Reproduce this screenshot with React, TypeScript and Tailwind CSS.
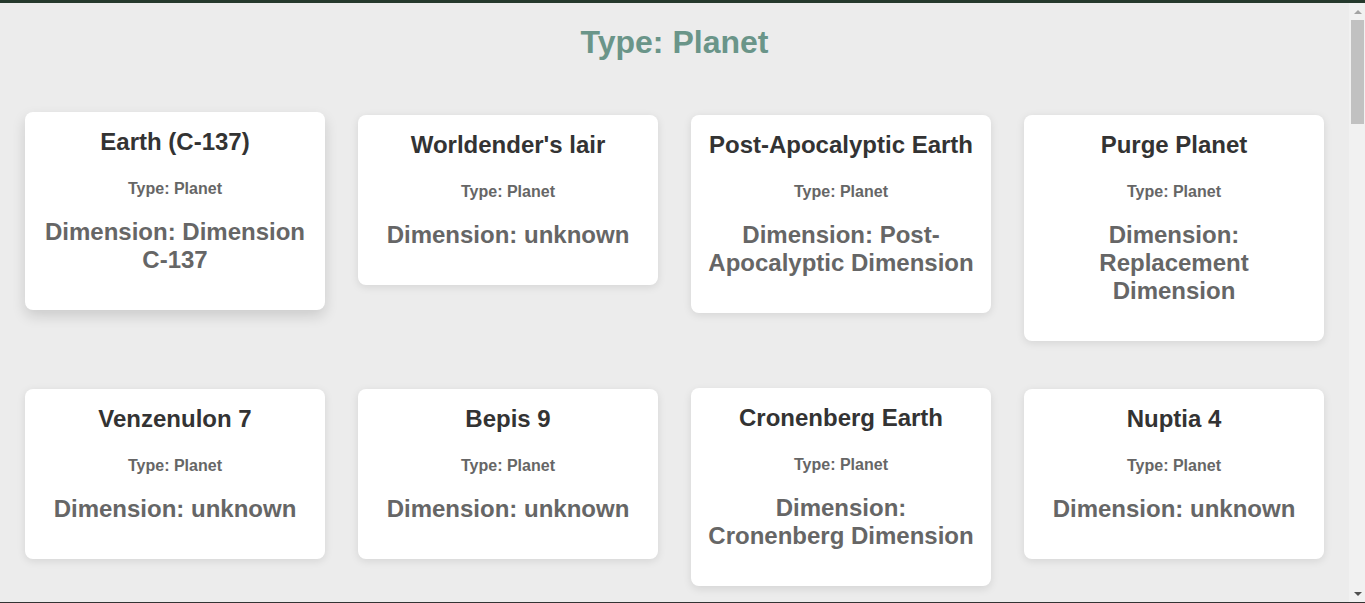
import React from "react";

type Planet = {
  name: string;
  dimension: string;
  lift?: string;
};

const planets: Planet[] = [
  { name: "Earth (C-137)", dimension: "Dimension C-137", lift: "hover" },
  { name: "Worldender's lair", dimension: "unknown" },
  { name: "Post-Apocalyptic Earth", dimension: "Post-Apocalyptic Dimension" },
  { name: "Purge Planet", dimension: "Replacement Dimension" },
  { name: "Venzenulon 7", dimension: "unknown" },
  { name: "Bepis 9", dimension: "unknown" },
  { name: "Cronenberg Earth", dimension: "Cronenberg Dimension", lift: "nudge" },
  { name: "Nuptia 4", dimension: "unknown" },
];

function PlanetCard({ planet }: { planet: Planet }) {
  const base =
    "w-[300px] rounded-lg bg-white px-4 pt-4 pb-[36px] text-center transition";
  const shadow =
    planet.lift === "hover"
      ? "-translate-y-[3px] shadow-[0_6px_14px_rgba(0,0,0,0.14)]"
      : planet.lift === "nudge"
        ? "-translate-y-px shadow-[0_3px_8px_rgba(0,0,0,0.1)]"
        : "shadow-[0_2px_8px_rgba(0,0,0,0.1)]";
  return (
    <div className={`${base} ${shadow}`}>
      <h3 className="text-[24px] font-bold leading-[1.15] text-[#333]">
        {planet.name}
      </h3>
      <p className="mt-[25px] text-[16px] font-bold leading-[1.15] text-[#666]">
        Type: Planet
      </p>
      <p className="mt-[19px] text-[24px] font-bold leading-[28px] text-[#666]">
        Dimension: {planet.dimension}
      </p>
    </div>
  );
}

// classic scrollbar look, drawn as a column next to the page
function ScrollBar() {
  return (
    <div className="flex w-[16px] flex-col bg-[#f1f1f1]">
      <div className="flex h-[17px] items-center justify-center pl-px">
        <div className="h-0 w-0 border-x-[4px] border-b-[4px] border-x-transparent border-b-[#a3a3a3]" />
      </div>
      <div className="ml-[2px] mr-px h-[104px] bg-[#c1c1c1]" />
      <div className="flex-1" />
      <div className="flex h-[17px] items-center justify-center pl-px">
        <div className="h-0 w-0 border-x-[4px] border-t-[4px] border-x-transparent border-t-[#505050]" />
      </div>
    </div>
  );
}

export default function App() {
  return (
    <div className="flex h-[603px] flex-col border-t-[3px] border-b border-t-[#25392d] border-b-[#333] font-['Liberation_Sans',Arial,sans-serif]">
      <div className="flex min-h-0 flex-1">
        <div className="min-w-0 flex-1 overflow-hidden bg-[#ececec]">
          {/* Header */}
          <h1 className="pt-[21px] text-center text-[32px] font-bold leading-[1.15] text-[#6a9589]">
            Type: Planet
          </h1>

          {/* Planet grid */}
          <div className="mt-[54px] grid grid-cols-[repeat(4,300px)] items-start justify-center gap-x-[33px] gap-y-12 pb-12">
            {planets.map((p) => (
              <PlanetCard key={p.name} planet={p} />
            ))}
          </div>
        </div>
        <ScrollBar />
      </div>
    </div>
  );
}
